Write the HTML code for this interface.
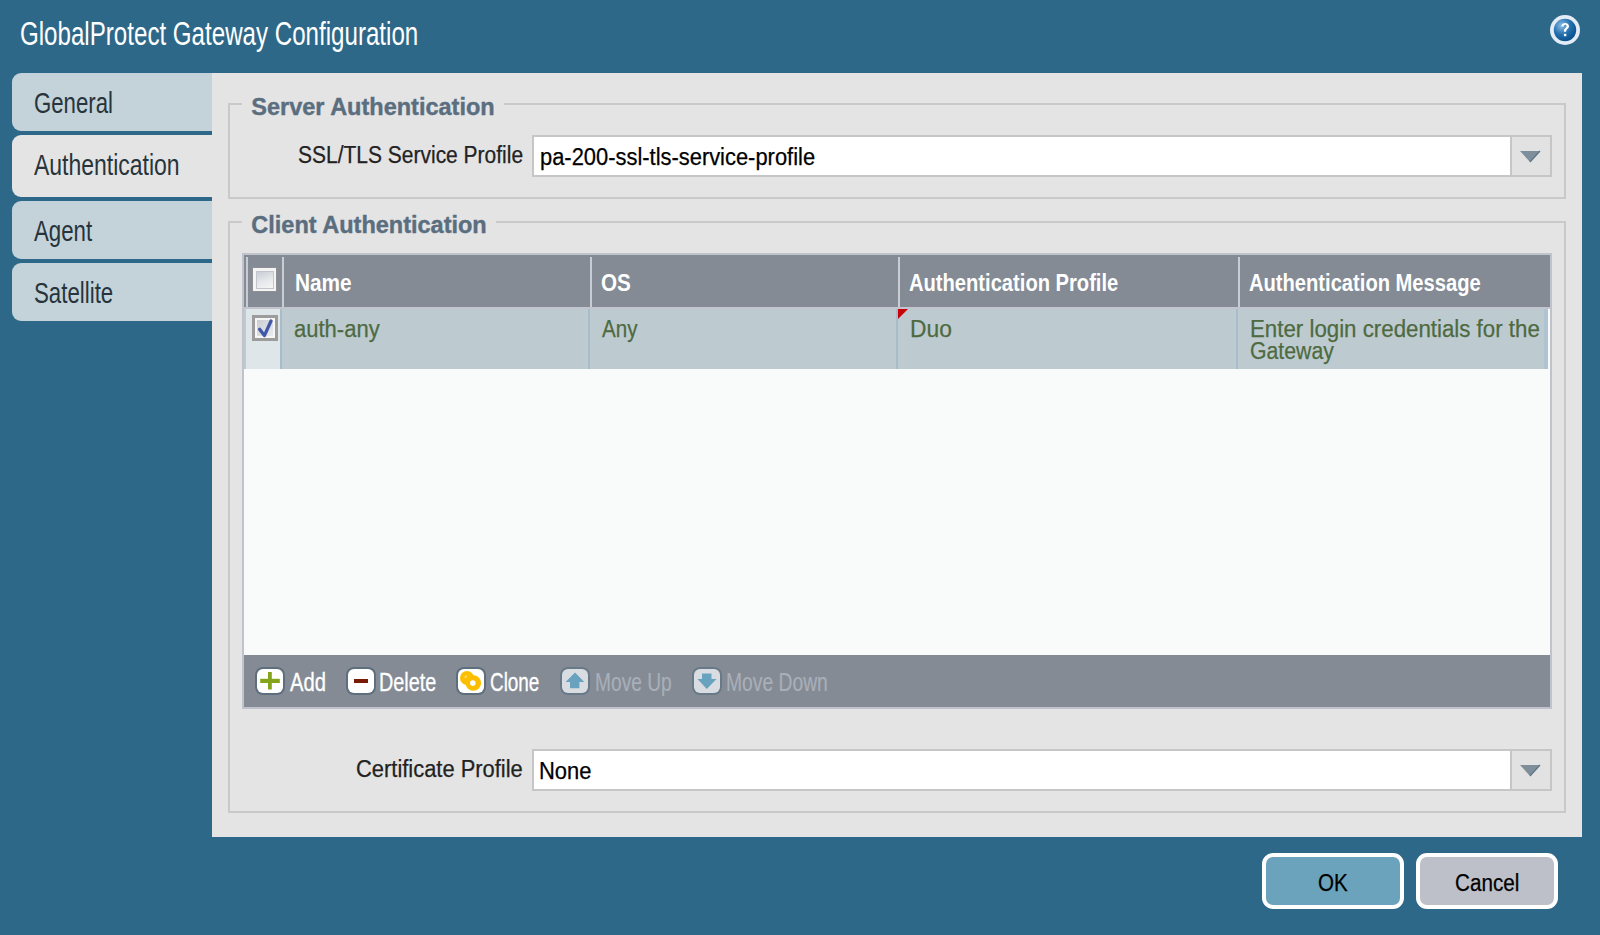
<!DOCTYPE html>
<html><head><meta charset="utf-8">
<style>
*{box-sizing:border-box;margin:0;padding:0}
html,body{width:1600px;height:935px;overflow:hidden}
body{background:#2e6888;font-family:"Liberation Sans",sans-serif;position:relative}
.a{position:absolute}
.t{position:absolute;white-space:nowrap;line-height:1;transform-origin:0 0}
.tab{position:absolute;left:12px;width:200px;background:#c3d3d9;border-radius:9px 0 0 9px}
.tab.sel{background:#e4e4e4}
.tabt{font-size:29.7px;color:#27343c}
.fs{position:absolute;border:2px solid #c9c9c9}
.leg{font-weight:bold;font-size:23.5px;color:#5a6e7f;-webkit-text-stroke:0.4px currentColor}
.lbl{font-size:23.5px;color:#222;-webkit-text-stroke:0.25px currentColor}
.inp{position:absolute;background:#fff;border:2px solid #c6c6c6}
.dd{position:absolute;background:#e2e2e2;border:2px solid #c6c6c6}
.hdr{font-weight:bold;font-size:24.6px;color:#fff}
.cell{font-size:23.5px;color:#4e6a40;-webkit-text-stroke:0.25px currentColor}
.tb{font-size:25px;color:#fff;-webkit-text-stroke:0.3px currentColor}
.tbd{color:#a9afb8;-webkit-text-stroke:0.2px currentColor}
.ico{position:absolute;top:667px;width:30px;height:28px;border-radius:8px;background:#5d6f7d}
.ico i{position:absolute;left:2px;top:2px;right:2px;bottom:2px;border-radius:6px;background:#fff;display:block}
.btn{position:absolute;top:853px;width:142px;height:56px;border:4px solid #fff;border-radius:11px}
</style></head><body>

<!-- title -->
<div class="t" style="left:19.5px;top:18px;font-size:32.7px;color:#fff;transform:scaleX(0.738)">GlobalProtect Gateway Configuration</div>

<!-- help icon -->
<svg class="a" style="left:1549px;top:14px" width="32" height="32" viewBox="0 0 32 32">
<defs><radialGradient id="hg" cx="0.35" cy="0.3" r="0.8"><stop offset="0" stop-color="#8cbde6"/><stop offset="0.5" stop-color="#2470ae"/><stop offset="1" stop-color="#054a86"/></radialGradient></defs>
<circle cx="16" cy="16" r="15" fill="#e4ecf6"/>
<circle cx="16" cy="16" r="11.2" fill="url(#hg)"/>
<path d="M12.3 12.6c0-2.3 1.7-3.7 3.9-3.7 2.2 0 3.8 1.3 3.8 3.3 0 2.4-2.8 2.8-2.8 5v0.6h-2.3v-0.8c0-2.8 2.7-3.1 2.7-4.8 0-0.9-0.6-1.4-1.5-1.4-1 0-1.6 0.7-1.6 1.8z" fill="#fff"/>
<rect x="14.9" y="19.8" width="2.4" height="2.4" fill="#fff"/>
</svg>

<!-- tabs -->
<div class="tab" style="top:73px;height:58px"></div>
<div class="tab sel" style="top:135px;height:62px"></div>
<div class="tab" style="top:201px;height:58px"></div>
<div class="tab" style="top:263px;height:58px"></div>
<div class="t tabt" style="left:34.1px;top:87.7px;transform:scaleX(0.748)">General</div>
<div class="t tabt" style="left:34.4px;top:150px;transform:scaleX(0.774)">Authentication</div>
<div class="t tabt" style="left:34px;top:215.8px;transform:scaleX(0.75)">Agent</div>
<div class="t tabt" style="left:34px;top:277.6px;transform:scaleX(0.75)">Satellite</div>

<!-- panel -->
<div class="a" style="left:212px;top:73px;width:1370px;height:764px;background:#e4e4e4"></div>

<!-- fieldset 1 -->
<div class="fs" style="left:228px;top:103px;width:1338px;height:96px"></div>
<div class="a" style="left:242px;top:100px;width:262px;height:8px;background:#e4e4e4"></div>
<div class="t leg" style="left:251.3px;top:95.7px">Server Authentication</div>
<div class="t lbl" style="left:298px;top:143.8px;transform:scaleX(0.893)">SSL/TLS Service Profile</div>
<div class="inp" style="left:532px;top:135px;width:1020px;height:42px"></div>
<div class="dd" style="left:1510px;top:135px;width:42px;height:42px"></div>
<svg class="a" style="left:1519px;top:150px" width="22" height="13" viewBox="0 0 22 13"><path d="M1 1H21L11 12Z" fill="#7e8f9b"/><path d="M21 1L11 12" stroke="#5f7383" stroke-width="1.2"/></svg>
<div class="t lbl" style="left:540px;top:146px;color:#000;transform:scaleX(0.932)">pa-200-ssl-tls-service-profile</div>

<!-- fieldset 2 -->
<div class="fs" style="left:228px;top:221px;width:1338px;height:592px"></div>
<div class="a" style="left:242px;top:218px;width:254px;height:8px;background:#e4e4e4"></div>
<div class="t leg" style="left:251.3px;top:213.7px">Client Authentication</div>

<!-- table -->
<div class="a" style="left:242px;top:253px;width:1310px;height:456px;border:2px solid #c0c3cc;background:#f9fbfb"></div>
<div class="a" style="left:244px;top:255px;width:1306px;height:52px;background:#848b95"></div>
<div class="a" style="left:244px;top:307px;width:1306px;height:2px;background:#c2c5cd"></div>
<div class="a" style="left:246px;top:257px;width:2px;height:50px;background:#c9ccd2"></div>
<div class="a" style="left:282px;top:257px;width:2px;height:50px;background:#c9ccd2"></div>
<div class="a" style="left:590px;top:257px;width:2px;height:50px;background:#c9ccd2"></div>
<div class="a" style="left:898px;top:257px;width:2px;height:50px;background:#c9ccd2"></div>
<div class="a" style="left:1238px;top:257px;width:2px;height:50px;background:#c9ccd2"></div>
<!-- header checkbox -->
<div class="a" style="left:252px;top:267px;width:25px;height:25px;border:1.5px solid #8d8f92;background:#f4f4f4"></div>
<div class="a" style="left:256px;top:271px;width:18px;height:17.5px;border:1px solid #c2c6cc;background:linear-gradient(160deg,#c9ced6,#e6e8eb 55%,#f6f6f6)"></div>
<div class="t hdr" style="left:294.5px;top:271.2px;transform:scaleX(0.846)">Name</div>
<div class="t hdr" style="left:601px;top:271.2px;transform:scaleX(0.84)">OS</div>
<div class="t hdr" style="left:909px;top:271.2px;transform:scaleX(0.819)">Authentication Profile</div>
<div class="t hdr" style="left:1248.8px;top:271.2px;transform:scaleX(0.819)">Authentication Message</div>

<!-- row -->
<div class="a" style="left:244px;top:309px;width:1300px;height:60px;background:#bdcbd1"></div>
<div class="a" style="left:1544px;top:309px;width:4px;height:60px;background:#b0c3d0"></div>
<div class="a" style="left:246px;top:309px;width:34px;height:60px;background:#dee6ea"></div>
<div class="a" style="left:280px;top:309px;width:2px;height:60px;background:#a8bdcc"></div>
<div class="a" style="left:588px;top:309px;width:2px;height:60px;background:#a8bdcc"></div>
<div class="a" style="left:896px;top:309px;width:2px;height:60px;background:#a8bdcc"></div>
<div class="a" style="left:1236px;top:309px;width:2px;height:60px;background:#a8bdcc"></div>
<svg class="a" style="left:898px;top:309px" width="11" height="11" viewBox="0 0 11 11"><path d="M0 0H10L0 10Z" fill="#c80308"/></svg>
<!-- row checkbox -->
<div class="a" style="left:252px;top:315px;width:26px;height:26px;border:3px solid #9c9c9c;background:#f6f6f6"></div>
<div class="a" style="left:257px;top:320px;width:16px;height:16px;background:linear-gradient(135deg,#c9cdd2,#e9ebee)"></div>
<svg class="a" style="left:254px;top:315px" width="24" height="24" viewBox="0 0 24 24"><path d="M5.6 14.2 L10.4 20.6 L17 6" fill="none" stroke="#4158a8" stroke-width="3.3" stroke-linecap="round" stroke-linejoin="round"/></svg>
<div class="t cell" style="left:293.5px;top:318px;transform:scaleX(0.937)">auth-any</div>
<div class="t cell" style="left:601.8px;top:318px;transform:scaleX(0.876)">Any</div>
<div class="t cell" style="left:910.1px;top:318px;transform:scaleX(0.97)">Duo</div>
<div class="t cell" style="left:1250.2px;top:318px;transform:scaleX(0.948)">Enter login credentials for the</div>
<div class="t cell" style="left:1250.4px;top:340px;transform:scaleX(0.904)">Gateway</div>

<!-- toolbar -->
<div class="a" style="left:244px;top:655px;width:1306px;height:52px;background:#848b95"></div>
<div class="ico" style="left:255px"><i></i></div>
<svg class="a" style="left:259px;top:671px" width="22" height="20" viewBox="0 0 22 20"><rect x="9" y="1" width="3.8" height="17.5" fill="#84a41c"/><rect x="1.2" y="7.8" width="19.6" height="4.2" fill="#84a41c"/></svg>
<div class="t tb" style="left:290.4px;top:670px;transform:scaleX(0.809)">Add</div>
<div class="ico" style="left:346px"><i></i></div>
<div class="a" style="left:354px;top:679px;width:14px;height:4px;background:#781a05"></div>
<div class="t tb" style="left:379.3px;top:670px;transform:scaleX(0.793)">Delete</div>
<div class="ico" style="left:456px"><i></i></div>
<svg class="a" style="left:456px;top:667px" width="30" height="28" viewBox="0 0 30 28"><circle cx="11" cy="11" r="7" fill="#fbbf00"/><circle cx="17.3" cy="16" r="7.8" fill="#fbbf00"/><circle cx="16.8" cy="16.1" r="2.8" fill="#fff"/><ellipse cx="9.8" cy="9.6" rx="1.6" ry="1.1" transform="rotate(-40 9.8 9.6)" fill="#ffd766"/></svg>
<div class="t tb" style="left:490.2px;top:670px;transform:scaleX(0.756)">Clone</div>
<div class="ico" style="left:560px;background:#687a88"><i style="background:#d9dde1"></i></div>
<svg class="a" style="left:560px;top:667px" width="30" height="28" viewBox="0 0 30 28"><path d="M15 5.5L24.3 15H19.4V21.3H10V15H5.6Z" fill="#69a2bf"/></svg>
<div class="t tb tbd" style="left:594.5px;top:670px;transform:scaleX(0.767)">Move Up</div>
<div class="ico" style="left:692px;background:#687a88"><i style="background:#d9dde1"></i></div>
<svg class="a" style="left:692px;top:667px" width="30" height="28" viewBox="0 0 30 28"><path d="M10 6.5H19.5V12H24.5L14.8 22L5.5 12H10Z" fill="#69a2bf"/></svg>
<div class="t tb tbd" style="left:726px;top:670px;transform:scaleX(0.771)">Move Down</div>

<!-- certificate profile -->
<div class="t lbl" style="left:356.1px;top:758.1px;transform:scaleX(0.932)">Certificate Profile</div>
<div class="inp" style="left:532px;top:749px;width:1020px;height:42px"></div>
<div class="dd" style="left:1510px;top:749px;width:42px;height:42px"></div>
<svg class="a" style="left:1519px;top:764px" width="22" height="13" viewBox="0 0 22 13"><path d="M1 1H21L11 12Z" fill="#7e8f9b"/><path d="M21 1L11 12" stroke="#5f7383" stroke-width="1.2"/></svg>
<div class="t lbl" style="left:539.1px;top:759.6px;color:#000;transform:scaleX(0.934)">None</div>

<!-- buttons -->
<div class="btn" style="left:1262px;background:#6ba3bd"></div>
<div class="t lbl" style="left:1318.1px;top:872px;color:#000;transform:scaleX(0.875)">OK</div>
<div class="btn" style="left:1416px;background:#bdc0c8"></div>
<div class="t lbl" style="left:1454.7px;top:872px;color:#000;transform:scaleX(0.879)">Cancel</div>

</body></html>
